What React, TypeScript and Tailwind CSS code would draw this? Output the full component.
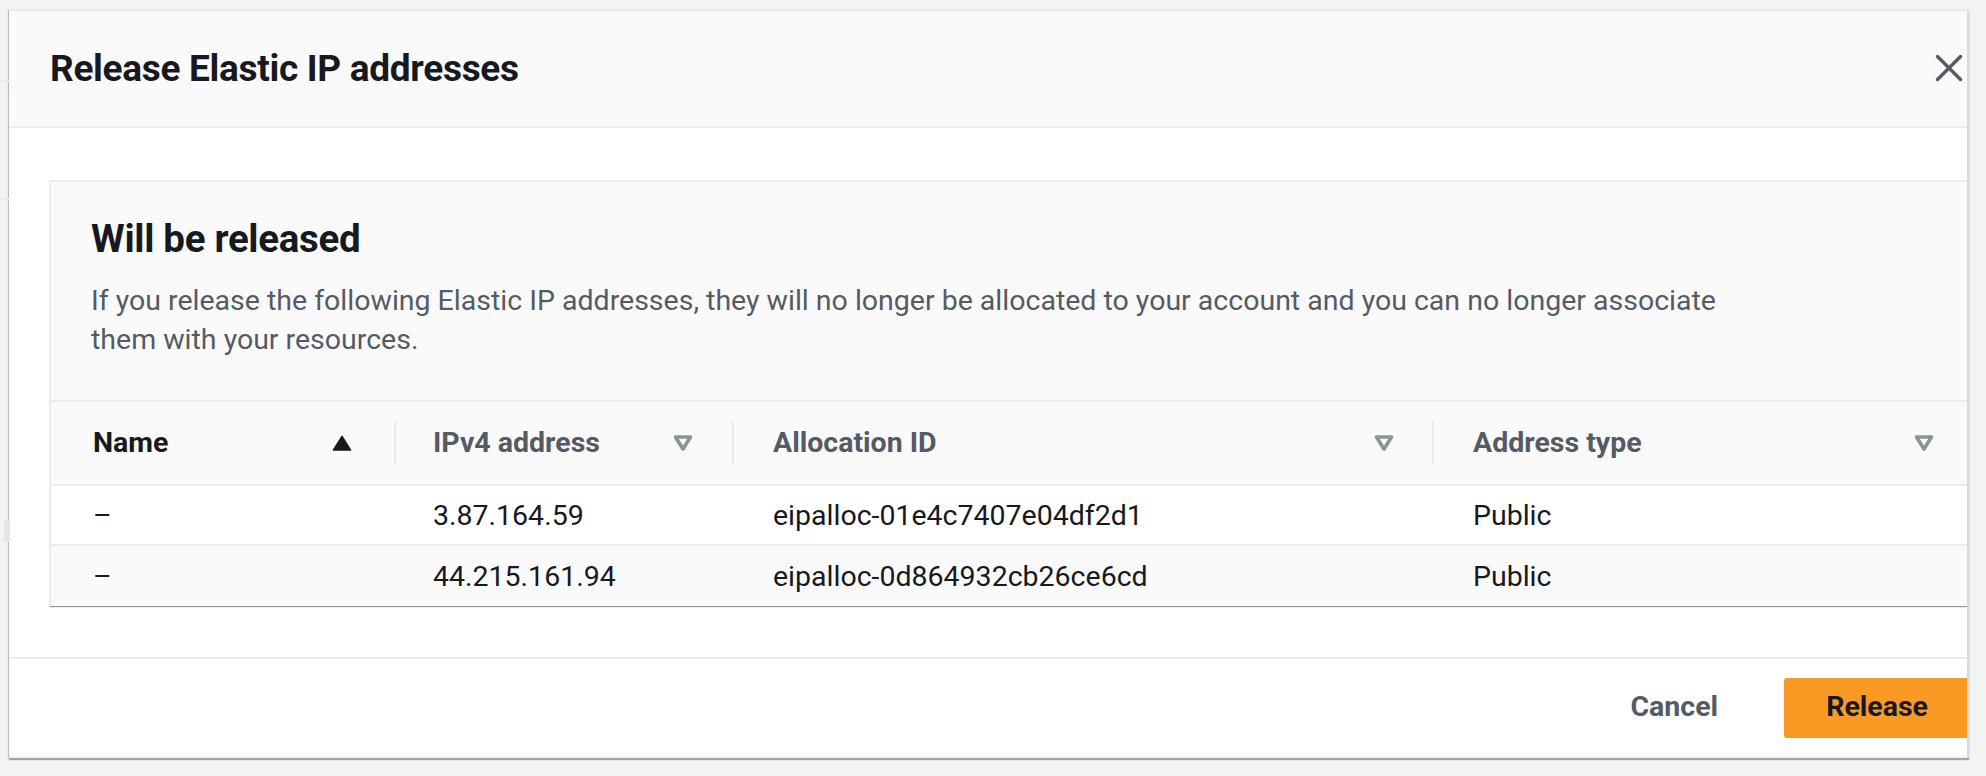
import React from "react";

const SortDown = () => (
  <svg width="20" height="16" viewBox="0 0 20 16" className="shrink-0">
    <path d="M2.5 2 H17.5 L10 14 Z" fill="none" stroke="#879596" strokeWidth="3.6" strokeLinejoin="round" />
  </svg>
);

const SortUp = () => (
  <svg width="20" height="16" viewBox="0 0 20 16" className="shrink-0">
    <path d="M10 1.5 L18.5 15 H1.5 Z" fill="#16191f" stroke="#16191f" strokeWidth="1.5" strokeLinejoin="round" />
  </svg>
);

const Divider = () => <div className="w-[2px] h-[44px] bg-[#eaeded] shrink-0" />;

export default function App() {
  const rows = [
    { name: "–", ip: "3.87.164.59", id: "eipalloc-01e4c7407e04df2d1", type: "Public", bg: "bg-white" },
    { name: "–", ip: "44.215.161.94", id: "eipalloc-0d864932cb26ce6cd", type: "Public", bg: "bg-[#fafafa]" },
  ];
  return (
    <div
      className="w-[1986px] h-[776px] bg-[#f2f3f3] relative overflow-hidden"
      style={{ fontFamily: "Roboto, 'Noto Sans', Arial, sans-serif" }}
    >
      <div className="absolute left-0 top-[80px] w-[10px] h-[2px] bg-[#e3eef2]" />
      <div className="absolute left-0 top-[198px] w-[10px] h-[2px] bg-[#e3eef2]" />
      <div className="absolute left-[4px] top-[520px] w-[6px] h-[22px] bg-[#e4e6e6]" />
      <div className="pt-[10px] pl-[9px]">
        <div className="w-[1960px] h-[748px] overflow-hidden border-r-[2px] border-[#d5dbdb] shadow-[0_2px_1px_rgba(0,28,36,0.35),-1px_0_1px_rgba(0,28,36,0.2)]">
          <div className="w-[2012px] bg-white border-t border-[#eaeded]">
            {/* header */}
            <div className="h-[117px] bg-[#fafafa] border-b-[2px] border-[#eaeded] flex items-center justify-between pl-[41px] pr-[58px]">
              <h1 className="text-[37px] leading-[42px] font-bold text-[#16191f] tracking-[-0.3px]">Release Elastic IP addresses</h1>
              <svg width="28" height="28" viewBox="0 0 28 28" className="mb-[2px]">
                <path d="M2.5 2.5 L25.5 25.5 M25.5 2.5 L2.5 25.5" stroke="#545b64" strokeWidth="3.4" strokeLinecap="round" />
              </svg>
            </div>
            {/* body */}
            <div className="pt-[52px] pb-[51px] px-[41px]">
              <div className="bg-[#fafafa] border-t-[2px] border-l border-[#eaeded] shadow-[0_1px_1px_rgba(0,28,36,0.45)]">
                <div className="pt-[36px] pb-[41px] pl-[40px]">
                  <h2 className="text-[38.5px] leading-[42px] font-bold text-[#16191f] tracking-[-0.3px]">Will be released</h2>
                  <p className="mt-[21px] text-[28.5px] leading-[39px] text-[#545b64]">
                    If you release the following Elastic IP addresses, they will no longer be allocated to your account and you can no longer associate
                    <br />
                    them with your resources.
                  </p>
                </div>
                <div className="border-t-[2px] border-[#eaeded]">
                  <div className="h-[84px] flex items-center bg-[#fafafa] border-b-[2px] border-[#eaeded] text-[28.5px] font-bold">
                    <div className="w-[343px] flex items-center pl-[42px] pr-[42px] justify-between text-[#16191f]">
                      <span>Name</span>
                      <SortUp />
                    </div>
                    <Divider />
                    <div className="w-[336px] flex items-center pl-[37px] pr-[39px] justify-between text-[#545b64]">
                      <span>IPv4 address</span>
                      <SortDown />
                    </div>
                    <Divider />
                    <div className="w-[698px] flex items-center pl-[39px] pr-[38px] justify-between text-[#545b64]">
                      <span>Allocation ID</span>
                      <SortDown />
                    </div>
                    <Divider />
                    <div className="flex-1 flex items-center pl-[39px] pr-[46px] justify-between text-[#545b64]">
                      <span>Address type</span>
                      <SortDown />
                    </div>
                  </div>
                  {rows.map((r, i) => (
                    <div
                      key={i}
                      className={`${r.bg} h-[60px] flex items-center pt-[3px] text-[28.5px] text-[#16191f] ${i === 0 ? "border-b-[2px] border-[#eaeded]" : ""}`}
                    >
                      <div className="w-[345px] pl-[42px]">{r.name}</div>
                      <div className="w-[338px] pl-[37px]">{r.ip}</div>
                      <div className="w-[700px] pl-[39px]">{r.id}</div>
                      <div className="flex-1 pl-[39px]">{r.type}</div>
                    </div>
                  ))}
                </div>
              </div>
            </div>
            {/* footer */}
            <div className="border-t-[2px] border-[#eaeded] h-[99px] flex items-center justify-end pr-[51px]">
              <button className="text-[28.5px] font-bold text-[#545b64] px-[20px] h-[60px] mr-[46px]">Cancel</button>
              <button className="h-[60px] px-[42px] rounded-[3px] bg-[#f89a24] text-[28.5px] font-bold text-[#16191f]">Release</button>
            </div>
          </div>
        </div>
      </div>
    </div>
  );
}
